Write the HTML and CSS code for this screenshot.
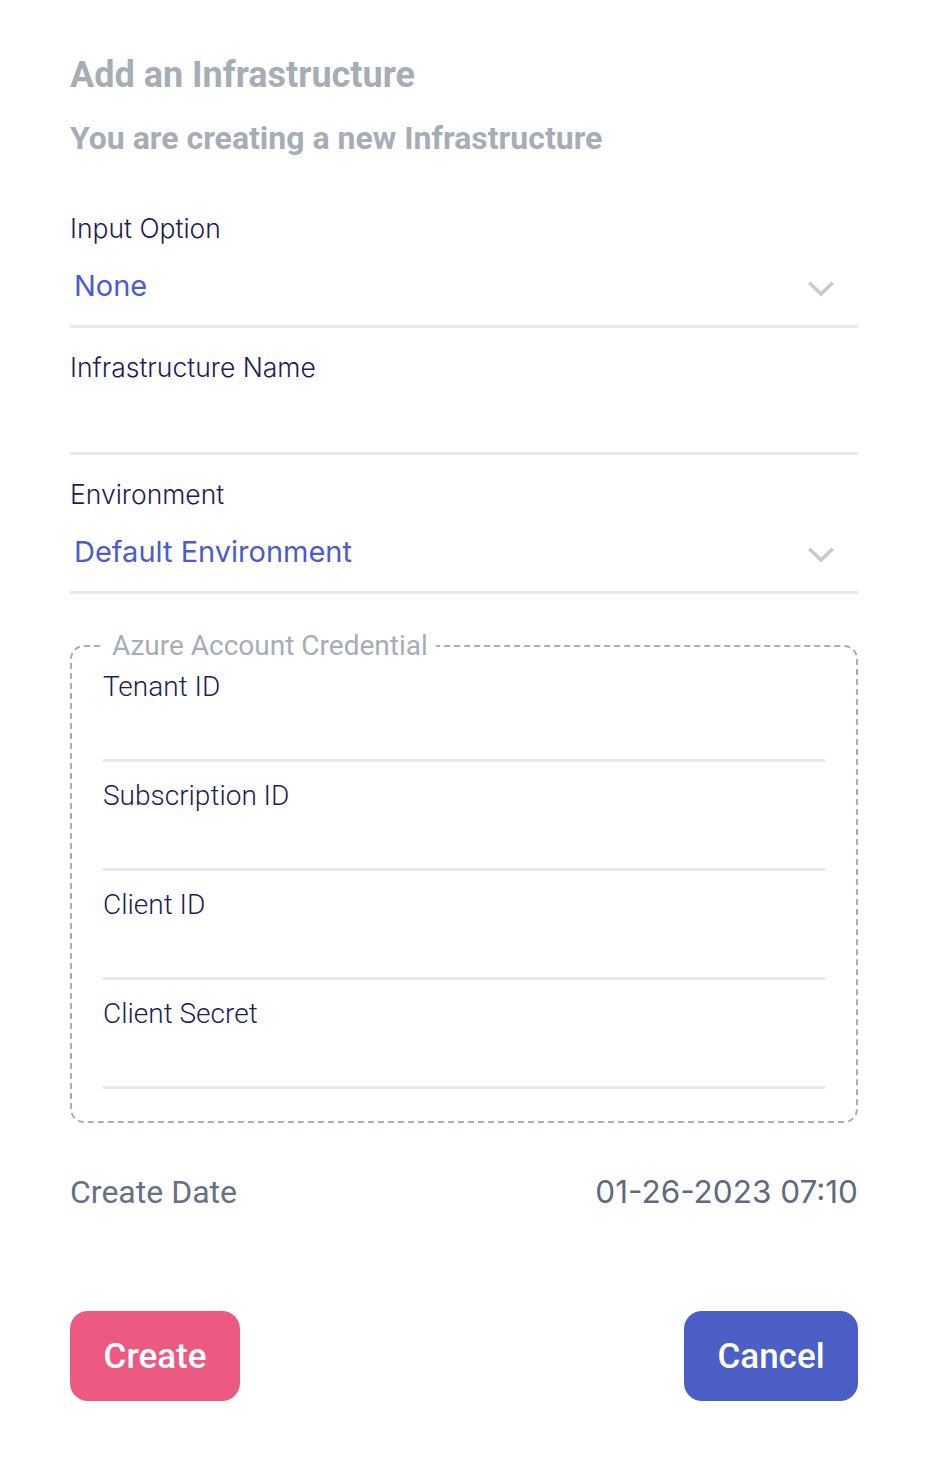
FILE: index.html
```html
<!DOCTYPE html>
<html>
<head>
<meta charset="utf-8">
<link rel="stylesheet" href="styles.css">
</head>
<body>
<div class="page">
  <h1 class="title">Add an Infrastructure</h1>
  <h2 class="subtitle">You are creating a new Infrastructure</h2>

  <div class="field">
    <div class="label">Input Option</div>
    <div class="select">
      <span class="value">None</span>
      <svg class="chev" width="26" height="16" viewBox="0 0 26 16"><path d="M2.5 3 L13 13 L23.5 3" fill="none" stroke="#c9c9c9" stroke-width="3.6" stroke-linecap="square"/></svg>
    </div>
  </div>

  <div class="field">
    <div class="label">Infrastructure Name</div>
    <div class="input"></div>
  </div>

  <div class="field">
    <div class="label">Environment</div>
    <div class="select">
      <span class="value">Default Environment</span>
      <svg class="chev" width="26" height="16" viewBox="0 0 26 16"><path d="M2.5 3 L13 13 L23.5 3" fill="none" stroke="#c9c9c9" stroke-width="3.6" stroke-linecap="square"/></svg>
    </div>
  </div>

  <fieldset class="group">
    <legend>Azure Account Credential</legend>
    <div class="subfield"><div class="label">Tenant ID</div><div class="input"></div></div>
    <div class="subfield"><div class="label">Subscription ID</div><div class="input"></div></div>
    <div class="subfield"><div class="label">Client ID</div><div class="input"></div></div>
    <div class="subfield"><div class="label">Client Secret</div><div class="input"></div></div>
  </fieldset>

  <div class="meta">
    <span class="meta-label">Create Date</span>
    <span class="meta-value">01-26-2023 07:10</span>
  </div>

  <div class="actions">
    <button class="btn btn-create">Create</button>
    <button class="btn btn-cancel">Cancel</button>
  </div>
</div>
</body>
</html>
```

FILE: styles.css
```css
html, body { margin: 0; padding: 0; background: #fff; }
body { font-family: Roboto, "Liberation Sans", sans-serif; }
.page {
  width: 788px;
  margin-left: 70px;
  padding-top: 53px;
}
.title {
  margin: 0;
  font-size: 36px;
  font-weight: 700;
  color: #a7adb5;
  line-height: 44px;
}
.subtitle {
  margin: 21px 0 0 0;
  font-size: 32px;
  font-weight: 700;
  color: #a7adb5;
  line-height: 40px;
}
.label {
  font-family: Inter, Roboto, sans-serif;
  font-size: 26.5px;
  font-weight: 300;
  color: #231a5a;
  line-height: 34px;
}
.field .label { padding-top: 22px; }
.field:first-of-type .label { padding-top: 53px; }
.select {
  display: flex;
  align-items: center;
  justify-content: space-between;
  height: 83px;
  border-bottom: 3px solid #e9e9e9;
  box-sizing: border-box;
  padding: 0 24px 0 4px;
}
.value {
  font-family: Inter, "Open Sans", sans-serif;
  font-size: 29px;
  color: #4a5cd0;
}
.chev { margin-top: 8px; }
.input {
  height: 71px;
  border-bottom: 3px solid #e9e9e9;
  box-sizing: border-box;
}
.group {
  margin: 37px 0 0 0;
  padding: 9px 31px 32px 31px;
  border: 2px dashed #a9afb6;
  border-radius: 14px;
}
.group legend {
  font-family: Roboto, sans-serif;
  font-size: 28px;
  color: #a7adb5;
  padding: 0 8px;
  margin-left: 1px;
  line-height: 30px;
}
.subfield .label {
  padding-top: 0;
  font-family: Roboto, sans-serif;
  font-weight: 300;
  font-size: 28px;
}
.subfield + .subfield .label { padding-top: 17px; }
.subfield .input { height: 58px; }
.meta {
  display: flex;
  justify-content: space-between;
  align-items: center;
  margin-top: 49px;
  line-height: 40px;
}
.meta-label { color: #687085; font-family: Roboto, sans-serif; font-size: 32px; }
.meta-value { color: #5f6a80; font-family: Inter, sans-serif; font-weight: 400; font-size: 31.5px; }
.actions {
  display: flex;
  justify-content: space-between;
  margin-top: 99px;
}
.btn {
  border: none;
  height: 90px;
  border-radius: 18px;
  color: #fff;
  font-family: Roboto, sans-serif;
  font-size: 35px;
  font-weight: 500;
  padding: 0;
}
.btn-create { background: #ec5a82; width: 170px; }
.btn-cancel { background: #4b5fc6; width: 174px; }
```
